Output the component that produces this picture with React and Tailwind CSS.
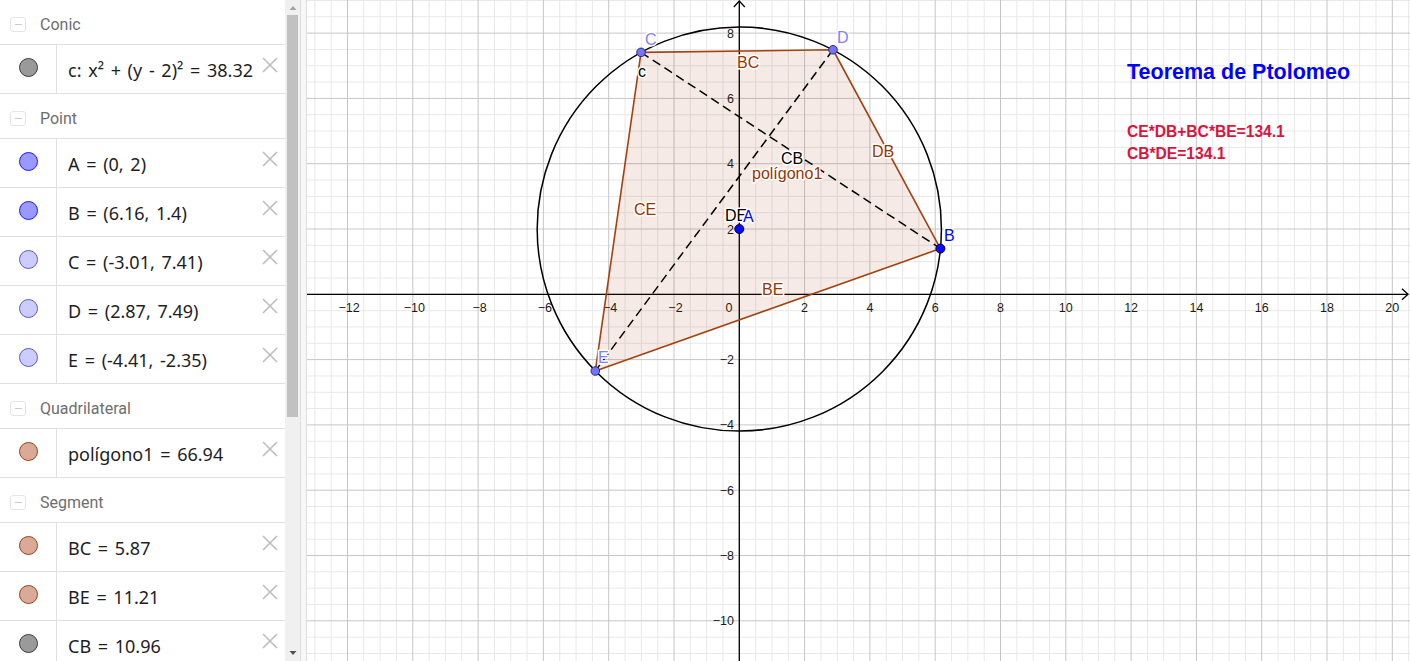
import React from 'react';

// graph coordinates -> page pixels (svg viewBox starts at x=307)
const X0 = 739.3;
const Y0 = 294.3;
const S = 32.65;
const px = (x) => X0 + S * x;
const py = (y) => Y0 - S * y;

const P = {
  A: [px(0), py(2)],
  B: [px(6.16), py(1.4)],
  C: [px(-3.01), py(7.41)],
  D: [px(2.87), py(7.49)],
  E: [px(-4.41), py(-2.35)],
};

const ITEMS = [
  { type: 'head', label: 'Conic' },
  { type: 'row', text: 'c: x² + (y - 2)² = 38.32', fill: '#9a9a9a', border: '#3a3a3a' },
  { type: 'head', label: 'Point' },
  { type: 'row', text: 'A = (0, 2)', fill: '#9999ff', border: '#1a1aff' },
  { type: 'row', text: 'B = (6.16, 1.4)', fill: '#9999ff', border: '#1a1aff' },
  { type: 'row', text: 'C = (-3.01, 7.41)', fill: '#ccccff', border: '#5a5acc' },
  { type: 'row', text: 'D = (2.87, 7.49)', fill: '#ccccff', border: '#5a5acc' },
  { type: 'row', text: 'E = (-4.41, -2.35)', fill: '#ccccff', border: '#5a5acc' },
  { type: 'head', label: 'Quadrilateral' },
  { type: 'row', text: 'polígono1 = 66.94', fill: '#d9aa98', border: '#a0400f' },
  { type: 'head', label: 'Segment' },
  { type: 'row', text: 'BC = 5.87', fill: '#d9aa98', border: '#a0400f' },
  { type: 'row', text: 'BE = 11.21', fill: '#d9aa98', border: '#a0400f' },
  { type: 'row', text: 'CB = 10.96', fill: '#9a9a9a', border: '#3a3a3a' },
];

const LABELS = [
  { t: 'C', x: 645, y: 45, c: '#7f7fff' },
  { t: 'D', x: 837, y: 43, c: '#7f7fff' },
  { t: 'c', x: 638, y: 77, c: '#000' },
  { t: 'BC', x: 737, y: 68, c: '#993300' },
  { t: 'DB', x: 872, y: 157, c: '#993300' },
  { t: 'CB', x: 781, y: 164, c: '#000' },
  { t: 'polígono1', x: 752, y: 179, c: '#993300' },
  { t: 'CE', x: 634, y: 215, c: '#993300' },
  { t: 'DE', x: 725, y: 221, c: '#000' },
  { t: 'A', x: 743, y: 222, c: '#0000ff' },
  { t: 'B', x: 944, y: 241, c: '#0000ff' },
  { t: 'BE', x: 762, y: 295, c: '#993300' },
  { t: 'E', x: 598, y: 363, c: '#7f7fff' },
];

function Header({ label }) {
  return (
    <div className="flex h-[45px] shrink-0 items-center border-b border-[#e0e0e0] pl-[10px] pt-[5px]">
      <div className="flex h-[15px] w-[16px] items-center justify-center rounded-[3px] border border-[#e4e4e4]">
        <div className="h-[1px] w-[7px] bg-[#d2c6c6]" />
      </div>
      <span className="ml-[14px] font-['Roboto',sans-serif] text-[16px] text-[#6e6e6e]">{label}</span>
    </div>
  );
}

function Row({ text, fill, border }) {
  return (
    <div className="flex h-[49px] shrink-0 border-b border-[#e0e0e0]">
      <div className="flex w-[57px] shrink-0 justify-center border-r border-[#e0e0e0] pt-[13px]">
        <div className="h-[19px] w-[19px] rounded-full border" style={{ background: fill, borderColor: border }} />
      </div>
      <div className="flex flex-1 items-start justify-between pl-[11px] pr-[7px]">
        <span className="mt-[10px] text-[18px] leading-[30px] text-[#1e1e1e] [word-spacing:2px]">{text}</span>
        <svg width="16" height="16" viewBox="0 0 16 16" className="mt-[12px]">
          <path d="M1 1 L15 15 M15 1 L1 15" stroke="#bdbdbd" strokeWidth="1.6" />
        </svg>
      </div>
    </div>
  );
}

function Graphics() {
  const v = [];
  for (let k = -27; k <= 42; k++) {
    const x = px(k / 2);
    if (x < 307 || x > 1410) continue;
    v.push({ x, major: k % 4 === 0 });
  }
  const h = [];
  for (let k = -23; k <= 19; k++) {
    const y = py(k / 2);
    if (y < 0 || y > 661) continue;
    h.push({ y, major: k % 4 === 0 });
  }
  const xTicks = [-12, -10, -8, -6, -4, -2, 2, 4, 6, 8, 10, 12, 14, 16, 18, 20];
  const yTicks = [8, 6, 4, 2, -2, -4, -6, -8, -10];
  const fmt = (n) => (n < 0 ? '\u2212' + Math.abs(n) : String(n));
  const poly = [P.C, P.D, P.B, P.E].map((p) => p.join(',')).join(' ');

  return (
    <svg
      viewBox="307 0 1103 661"
      width="1103"
      height="661"
      className="block shrink-0 font-['Liberation_Sans',Arial,sans-serif]"
    >
      <rect x="307" y="0" width="1103" height="661" fill="#fff" />
      {v.filter((l) => !l.major).map((l) => (
        <line key={'vm' + l.x} x1={l.x} y1="0" x2={l.x} y2="661" stroke="#e8e8e8" strokeWidth="1" />
      ))}
      {h.filter((l) => !l.major).map((l) => (
        <line key={'hm' + l.y} x1="307" y1={l.y} x2="1410" y2={l.y} stroke="#e8e8e8" strokeWidth="1" />
      ))}
      {v.filter((l) => l.major).map((l) => (
        <line key={'vM' + l.x} x1={l.x} y1="0" x2={l.x} y2="661" stroke="#c6c6c6" strokeWidth="1" />
      ))}
      {h.filter((l) => l.major).map((l) => (
        <line key={'hM' + l.y} x1="307" y1={l.y} x2="1410" y2={l.y} stroke="#c6c6c6" strokeWidth="1" />
      ))}

      {/* axes */}
      <line x1="307" y1={Y0} x2="1408" y2={Y0} stroke="#000" strokeWidth="1.3" />
      <line x1={X0} y1="661" x2={X0} y2="1" stroke="#000" strokeWidth="1.3" />
      <path d={`M1402 ${Y0 - 5.5} L1408 ${Y0} L1402 ${Y0 + 5.5}`} fill="none" stroke="#000" strokeWidth="1.3" />
      <path d={`M${X0 - 5.5} 7 L${X0} 1 L${X0 + 5.5} 7`} fill="none" stroke="#000" strokeWidth="1.3" />

      {xTicks.map((n) => (
        <text key={'x' + n} x={px(n) + (n < 0 ? 1.5 : 0)} y="311.5" textAnchor="middle" fontSize="12.5" fill="#1a1a1a">
          {fmt(n)}
        </text>
      ))}
      <text x="729" y="311.5" textAnchor="middle" fontSize="12.5" fill="#1a1a1a">0</text>
      {yTicks.map((n) => (
        <text key={'y' + n} x="734" y={py(n) + 4.5} textAnchor="end" fontSize="12.5" fill="#1a1a1a">
          {fmt(n)}
        </text>
      ))}

      {/* quadrilateral */}
      <polygon points={poly} fill="#993300" fillOpacity="0.1" stroke="#a3420f" strokeWidth="1.6" strokeLinejoin="round" />

      {/* diagonals */}
      <line x1={P.C[0]} y1={P.C[1]} x2={P.B[0]} y2={P.B[1]} stroke="#000" strokeWidth="1.5" strokeDasharray="9 5" />
      <line x1={P.D[0]} y1={P.D[1]} x2={P.E[0]} y2={P.E[1]} stroke="#000" strokeWidth="1.5" strokeDasharray="9 5" />

      {/* circle */}
      <circle cx={P.A[0]} cy={P.A[1]} r={S * Math.sqrt(38.32)} fill="none" stroke="#000" strokeWidth="1.5" />

      {/* points */}
      {['C', 'D', 'E'].map((k) => (
        <circle key={k} cx={P[k][0]} cy={P[k][1]} r="4.3" fill="#7373ff" stroke="#2c2c7a" strokeWidth="1" />
      ))}
      {['A', 'B'].map((k) => (
        <circle key={k} cx={P[k][0]} cy={P[k][1]} r="4.5" fill="#0a0aff" stroke="#00004d" strokeWidth="1" />
      ))}

      {LABELS.map((l) => (
        <text
          key={l.t}
          x={l.x}
          y={l.y}
          fontSize="16"
          fill={l.c}
          stroke="#fff"
          strokeWidth="3"
          strokeLinejoin="round"
          paintOrder="stroke"
        >
          {l.t}
        </text>
      ))}

      <text x="1127" y="78.5" fontSize="21.5" fontWeight="700" fill="#0000ff">Teorema de Ptolomeo</text>
      <text x="1127" y="136.8" fontSize="15.6" fontWeight="700" fill="#dc143c">CE*DB+BC*BE=134.1</text>
      <text x="1127" y="158.5" fontSize="15.6" fontWeight="700" fill="#dc143c">CB*DE=134.1</text>
    </svg>
  );
}

export default function App() {
  return (
    <div className="flex h-[661px] w-[1410px] overflow-hidden bg-white font-['Noto_Sans',sans-serif]">
      {/* ── Algebra view ─────────────────────────── */}
      <div className="flex w-[285px] shrink-0 flex-col overflow-hidden">
        {ITEMS.map((it, i) =>
          it.type === 'head' ? <Header key={i} label={it.label} /> : <Row key={i} {...it} />
        )}
      </div>

      {/* scrollbar */}
      <div className="flex w-[15px] shrink-0 flex-col items-center bg-[#f0f0f0]">
        <svg width="8" height="15" viewBox="0 0 8 15">
          <path d="M0.5 10 L4 6 L7.5 10 Z" fill="#a3a3a3" />
        </svg>
        <div className="h-[402px] w-[11px] bg-[#c1c1c1]" />
        <div className="flex-1" />
        <svg width="8" height="15" viewBox="0 0 8 15">
          <path d="M0.5 5 L4 9 L7.5 5 Z" fill="#505050" />
        </svg>
      </div>

      {/* split divider */}
      <div className="w-[7px] shrink-0 border-l border-r border-[#dedede] bg-[#f7f7f7]" />

      {/* ── Graphics view ────────────────────────── */}
      <Graphics />
    </div>
  );
}
